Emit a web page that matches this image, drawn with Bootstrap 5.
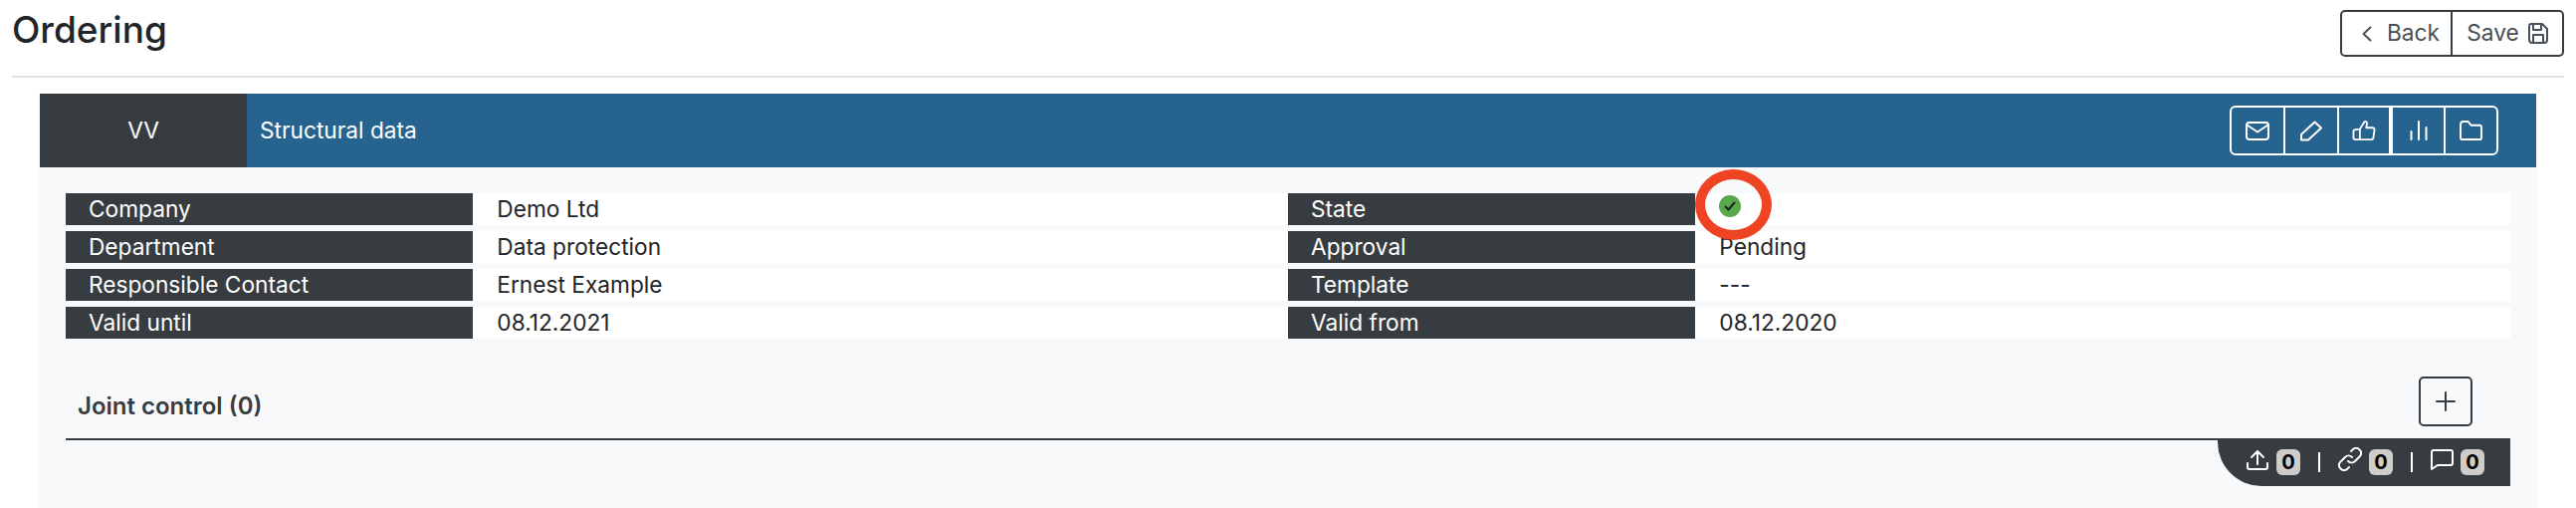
<!DOCTYPE html>
<html lang="en">
  <head>
    <meta charset="utf-8" />
    <meta name="viewport" content="width=device-width, initial-scale=1" />
    <title>Ordering</title>
    <link
      href="https://cdn.jsdelivr.net/npm/bootstrap@5.3.3/dist/css/bootstrap.min.css"
      rel="stylesheet"
    />
    <style>
      body {
        font-family: Inter, "Liberation Sans", sans-serif;
        font-size: 22.7px;
        color: #212529;
        height: 510px;
        overflow: hidden;
      }
      svg {
        fill: none;
        stroke: currentColor;
        stroke-width: 2;
        stroke-linecap: round;
        stroke-linejoin: round;
        display: block;
      }

      /* Page head */
      .page-head {
        height: 78px;
        margin: 0 12px 16px;
        border-bottom: 2px solid #dee2e6;
        padding-top: 10px;
      }
      .page-title {
        font-size: 37px;
        font-weight: 500;
        line-height: 40px;
        margin: 0;
      }
      .head-group {
        --bs-border-width: 2px;
      }
      .head-btn {
        height: 47px;
        padding: 0;
        border: 2px solid #373c40;
        border-radius: 5px;
        color: #495057;
        font-size: 22.7px;
      }
      .back-btn {
        width: 113px;
        padding-left: 9px;
        gap: 15px;
      }
      .save-btn {
        width: 114px;
        gap: 9px;
      }

      /* Panel */
      .data-panel {
        margin: 0 38px;
        padding: 0 2px;
        height: 416px;
        background-color: #f8f9fa;
      }
      .panel-bar {
        height: 74px;
        background-color: #26638f;
        color: #fff;
      }
      .panel-code {
        width: 208px;
        background-color: #373c40;
      }
      .panel-name {
        padding-left: 13px;
      }
      .panel-tools {
        --bs-border-width: 2px;
        margin-right: 38px;
      }
      .tool-btn {
        height: 50px;
        padding: 0;
        border: 2px solid #fff;
        border-radius: 6px;
        color: #fff;
      }
      .tool-btn:nth-child(1) { width: 56px; }
      .tool-btn:nth-child(2) { width: 56px; }
      .tool-btn:nth-child(3) { width: 54px; }
      .tool-btn:nth-child(4) { width: 55px; }
      .tool-btn:nth-child(5) { width: 55px; }
      .panel-tools > .btn.tool-btn.tool-gap:nth-child(4) { margin-left: 0; }
      .tool-btn:hover { color: #fff; }

      /* Data rows */
      .data-rows {
        margin: 26px 26px 0;
      }
      .data-row {
        height: 32px;
        margin-bottom: 6px;
        background-color: #fff;
        line-height: 32px;
      }
      .data-label {
        background-color: #373c40;
        color: #fff;
        padding-left: 23px;
      }
      .state-dot {
        width: 22px;
        height: 22px;
        margin-top: 2px;
        border-radius: 50%;
        background-color: #5aa84c;
        color: #1c2124;
        stroke-width: 2.6;
      }
      .state-mark {
        position: absolute;
        left: 1703px;
        top: 170px;
        width: 77px;
        height: 71px;
        border: 10px solid #ef4423;
        border-radius: 50%;
      }

      /* Joint control */
      .joint-head {
        margin: 38px 26px 0;
        padding: 0 38px 12px 12px;
        border-bottom: 2px solid #373c40;
      }
      .joint-title {
        margin-top: 10px;
        font-size: 24px;
        font-weight: 600;
        color: #373c40;
      }
      .add-btn {
        width: 54px;
        height: 50px;
        padding: 0;
        border: 2px solid #373c40;
        border-radius: 5px;
        color: #373c40;
      }
      .count-bar {
        width: 294px;
        height: 48px;
        margin: -2px 26px 0 auto;
        padding-right: 26px;
        background-color: #373c40;
        border-bottom-left-radius: 44px;
        color: #fff;
      }
      .count-bar svg {
        margin-bottom: 6px;
      }
      .count-num {
        width: 24px;
        height: 26px;
        margin-left: 7px;
        padding: 0;
        background-color: #cfcdca;
        border-radius: 6px;
        color: #000;
        font-size: 20px;
        font-weight: 700;
        line-height: 26px;
      }
      .count-sep {
        width: 2px;
        height: 20px;
        margin: 0 18px;
        background-color: #fff;
      }
    </style>
  </head>
  <body>
    <header class="page-head d-flex justify-content-between align-items-start">
      <h1 class="page-title">Ordering</h1>
      <div class="btn-group head-group">
        <button type="button" class="btn head-btn back-btn d-flex align-items-center justify-content-center">
          <svg width="10" height="16" viewBox="0 0 10 16"><path d="M8.500 1.500 1.500 8 8.500 14.500" /></svg>
          Back
        </button>
        <button type="button" class="btn head-btn save-btn d-flex align-items-center justify-content-center">
          Save
          <svg width="20" height="21" viewBox="0 0 20 21">
            <path d="M3 1h11l5 5v11a3 3 0 0 1-3 3H4a3 3 0 0 1-3-3V3a2 2 0 0 1 2-2z" />
            <path d="M5 1v6h8V1M5 20v-8h10v8" />
          </svg>
        </button>
      </div>
    </header>

    <main class="data-panel">
      <div class="panel-bar d-flex align-items-center">
        <div class="panel-code h-100 d-flex align-items-center justify-content-center">VV</div>
        <div class="panel-name flex-grow-1">Structural data</div>
        <div class="btn-group panel-tools">
          <button type="button" class="btn tool-btn d-flex align-items-center justify-content-center" aria-label="Mail">
            <svg width="24" height="19" viewBox="0 0 24 19">
              <rect x="1" y="1" width="22" height="17" rx="3" />
              <path d="M1.500 3.500 12 10.500l10.500-7" />
            </svg>
          </button>
          <button type="button" class="btn tool-btn d-flex align-items-center justify-content-center" aria-label="Edit">
            <svg width="24" height="22" viewBox="0 0 24 22">
              <path d="M2 15 15.500 2.500 22 8.500 9 20.500 2 20.500z" />
            </svg>
          </button>
          <button type="button" class="btn tool-btn d-flex align-items-center justify-content-center" aria-label="Approve">
            <svg width="24" height="22" viewBox="0 0 25 24">
              <path d="M8 10.500 13 2.500c1.500-1 3 .2 2.800 2L15 9h7a2 2 0 0 1 2 2.300l-1.300 9.200a2 2 0 0 1-2 1.500H3a2 2 0 0 1-2-2v-7a2 2 0 0 1 2-2z" />
              <path d="M8 10.500V22" />
            </svg>
          </button>
          <button type="button" class="btn tool-btn tool-gap d-flex align-items-center justify-content-center" aria-label="Statistics">
            <svg width="18" height="20" viewBox="0 0 18 20">
              <path d="M1.500 11v8M9 1v18M16.500 7v12" />
            </svg>
          </button>
          <button type="button" class="btn tool-btn d-flex align-items-center justify-content-center" aria-label="Files">
            <svg width="23" height="20" viewBox="0 0 24 21">
              <path d="M1 4a3 3 0 0 1 3-3h5l3 4h9a2 2 0 0 1 2 2v11a2 2 0 0 1-2 2H3a2 2 0 0 1-2-2z" />
            </svg>
          </button>
        </div>
      </div>

      <div class="data-rows">
        <div class="data-row row g-0">
          <div class="col-2 data-label">Company</div>
          <div class="col-4 px-4">Demo Ltd</div>
          <div class="col-2 data-label">State</div>
          <div class="col-4 px-4">
            <div class="state-dot d-flex align-items-center justify-content-center">
              <svg width="12" height="10" viewBox="0 0 12 10"><path d="M1.500 5.500 4.500 8.500 10.500 1.500" /></svg>
            </div>
          </div>
        </div>
        <div class="data-row row g-0">
          <div class="col-2 data-label">Department</div>
          <div class="col-4 px-4">Data protection</div>
          <div class="col-2 data-label">Approval</div>
          <div class="col-4 px-4">Pending</div>
        </div>
        <div class="data-row row g-0">
          <div class="col-2 data-label">Responsible Contact</div>
          <div class="col-4 px-4">Ernest Example</div>
          <div class="col-2 data-label">Template</div>
          <div class="col-4 px-4">---</div>
        </div>
        <div class="data-row row g-0">
          <div class="col-2 data-label">Valid until</div>
          <div class="col-4 px-4">08.12.2021</div>
          <div class="col-2 data-label">Valid from</div>
          <div class="col-4 px-4">08.12.2020</div>
        </div>
      </div>

      <div class="joint-head d-flex justify-content-between align-items-center">
        <div class="joint-title">Joint control (0)</div>
        <button type="button" class="btn add-btn d-flex align-items-center justify-content-center" aria-label="Add">
          <svg width="20" height="20" viewBox="0 0 20 20"><path d="M10 1v18M1 10h18" /></svg>
        </button>
      </div>
      <div class="count-bar d-flex align-items-center justify-content-end">
        <svg width="24" height="21" viewBox="0 0 24 21">
          <path d="M12 15V2M6 8l6-6 6 6M2 14v4a2 2 0 0 0 2 2h16a2 2 0 0 0 2-2v-4" />
        </svg>
        <span class="badge count-num">0</span>
        <span class="count-sep"></span>
        <svg width="24" height="24" viewBox="0 0 24 24">
          <path d="M10 14a5 5 0 0 0 7 0l5-5a5 5 0 0 0-7-7l-2 2" />
          <path d="M14 10a5 5 0 0 0-7 0l-5 5a5 5 0 0 0 7 7l2-2" />
        </svg>
        <span class="badge count-num">0</span>
        <span class="count-sep"></span>
        <svg width="23" height="21" viewBox="0 0 23 21">
          <path d="M3 1h17a2 2 0 0 1 2 2v11a2 2 0 0 1-2 2H7l-6 4V3a2 2 0 0 1 2-2z" />
        </svg>
        <span class="badge count-num">0</span>
      </div>
    </main>

    <div class="state-mark"></div>

    <script src="https://cdn.jsdelivr.net/npm/bootstrap@5.3.3/dist/js/bootstrap.bundle.min.js"></script>
  </body>
</html>
